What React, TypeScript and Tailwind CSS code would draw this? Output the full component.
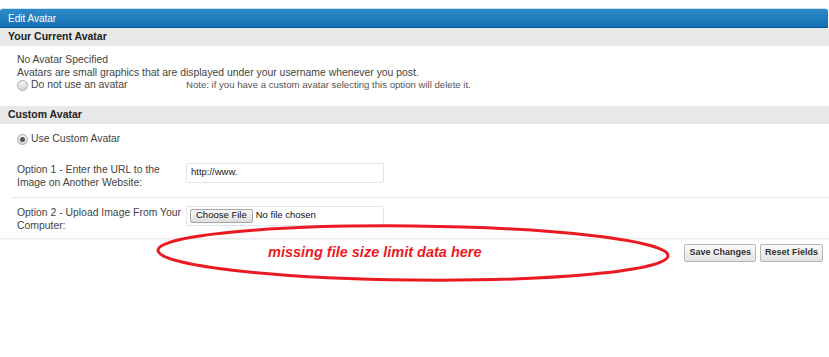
const sans = "font-['Liberation_Sans',Arial,sans-serif]";

function Radio({ checked }: { checked?: boolean }) {
  return (
    <span className="relative inline-flex w-[11px] h-[11px] rounded-full border border-[#a9a9a9] bg-linear-to-b from-[#f4f4f4] to-[#d6d6d6] items-center justify-center shrink-0">
      {checked && <span className="w-[5px] h-[5px] rounded-full bg-[#555]" />}
    </span>
  );
}

function SectionHeader({ title }: { title: string }) {
  return (
    <div className="h-[18px] bg-[#e8e8e8] px-2 flex items-center font-bold text-[10.5px] text-[#222]">
      {title}
    </div>
  );
}

export default function App() {
  return (
    <div className={`min-h-screen bg-white text-[#444] ${sans}`}>
      <div className="relative pt-[8px]">
        <div className="h-[20px] mr-px rounded-t-[3px] border-t border-[#cfe1ef] bg-linear-to-b from-[#2e8bc9] to-[#1170b3] border-b border-b-[#0a5a99] px-2 flex items-center text-white text-[10px]">
          Edit Avatar
        </div>

        <SectionHeader title="Your Current Avatar" />
        <div className="pl-[17px] pt-[8px] pb-[14px] text-[10.4px] leading-[12.5px]">
          <div>No Avatar Specified</div>
          <div>Avatars are small graphics that are displayed under your username whenever you post.</div>
          <div className="flex items-center">
            <div className="w-[169px] flex items-center gap-[3px]">
              <Radio />
              <span>Do not use an avatar</span>
            </div>
            <span className="text-[9.6px] text-[#555]">
              Note: if you have a custom avatar selecting this option will delete it.
            </span>
          </div>
        </div>

        <SectionHeader title="Custom Avatar" />
        <div className="pt-[9px] text-[10.4px]">
          <div className="pl-[17px] flex items-center gap-[3px] h-[13px]">
            <Radio checked />
            <span>Use Custom Avatar</span>
          </div>

          <div className="mt-[17px] pl-[17px] pb-[8px] flex items-start">
            <div className="w-[169px] leading-[13px]">
              Option 1 - Enter the URL to the
              <br />
              Image on Another Website:
            </div>
            <div className="w-[198px] h-[20px] border border-[#e2e6ea] rounded-[2px] flex items-center pl-[4px] text-[9.5px] text-[#222]">
              http://www.
            </div>
          </div>

          <div className="ml-[12px] border-t border-[#e8e8e8]" />

          <div className="pt-[8px] pl-[17px] pb-[6px] flex items-start">
            <div className="w-[169px] leading-[13px]">
              Option 2 - Upload Image From Your
              <br />
              Computer:
            </div>
            <div className="w-[198px] h-[20px] border border-[#e2e6ea] rounded-[2px] flex items-center pl-[3px] gap-[3px] text-[9.5px] text-[#111]">
              <span className="h-[14px] px-[5px] border border-[#a6a6a6] rounded-[2px] bg-linear-to-b from-[#f7f7f7] to-[#dedede] flex items-center">
                Choose File
              </span>
              <span>No file chosen</span>
            </div>
          </div>
        </div>

        <div className="h-[2px] bg-linear-to-b from-[#e9e9e9] to-[#f8f8f8]" />
        <div className="pt-[4px] pr-[6px] flex justify-end gap-[4px]">
          <button className="h-[18px] px-[4px] border border-[#b5b5b5] rounded-[2px] bg-linear-to-b from-[#fbfbfb] to-[#e3e3e3] text-[9px] font-bold text-[#333]">
            Save Changes
          </button>
          <button className="h-[18px] px-[4px] border border-[#b5b5b5] rounded-[2px] bg-linear-to-b from-[#fbfbfb] to-[#e3e3e3] text-[9px] font-bold text-[#333]">
            Reset Fields
          </button>
        </div>

        {/* annotation drawn over the page */}
        <div className="absolute left-[150px] top-[222px] w-[530px] h-[66px]">
          <svg width="530" height="66" viewBox="0 0 530 66" className="absolute inset-0">
            <ellipse
              cx="263"
              cy="31"
              rx="255"
              ry="27"
              fill="none"
              stroke="#ea1a22"
              strokeWidth="3"
              transform="rotate(0.6 263 31)"
            />
          </svg>
          <div className="absolute left-[118px] top-[21px] text-[14.5px] font-bold italic text-[#ea1a22] leading-[18px] whitespace-nowrap">
            missing file size limit data here
          </div>
        </div>
      </div>
    </div>
  );
}
